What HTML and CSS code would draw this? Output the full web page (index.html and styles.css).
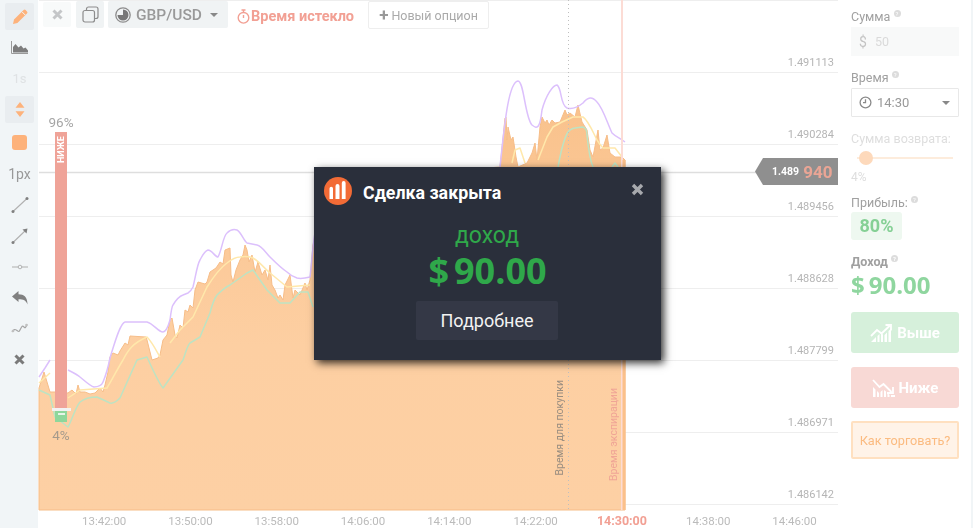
FILE: index.html
```html
<!DOCTYPE html>
<html lang="ru">
<head>
<meta charset="utf-8">
<title>Сделка закрыта</title>
<link rel="stylesheet" href="styles.css">
</head>
<body>
<div class="app">
  <aside class="tools">
    <div class="tool tool-box">
      <svg width="18" height="18" viewBox="0 0 18 18"><path d="M2 16l1-4.400L12.600 2a1.400 1.400 0 0 1 2 0l1.400 1.400a1.400 1.400 0 0 1 0 2L6.400 15z" fill="#fdb27b"/><path d="M11 3.800l3.200 3.200" stroke="#f1f5f7" stroke-width="1"/></svg>
    </div>
    <div class="tool">
      <svg width="17" height="13" viewBox="0 0 17 13"><path d="M.5 0v12.500H17" fill="none" stroke="#999" stroke-width="1"/><path d="M2 11.500V6l2.500-3 3 3.500L10 4.500l2.500 3 2-1 2.500 3v2z" fill="#7d7d7d"/></svg>
    </div>
    <div class="tool tool-faint">1s</div>
    <div class="tool tool-box">
      <svg width="12" height="15" viewBox="0 0 12 15"><path d="M6 0l4.500 5.800h-9zM6 15l-4.500-5.800h9z" fill="#fdb27b"/></svg>
    </div>
    <div class="tool tool-swatch"><span class="swatch"></span></div>
    <div class="tool tool-text">1px</div>
    <div class="tool">
      <svg width="18" height="16" viewBox="0 0 18 16"><path d="M2 14.500L16 1.500" stroke="#b0b0b0" stroke-width="1.100"/><circle cx="2" cy="14.500" r="1.500" fill="#808080"/><circle cx="16" cy="1.500" r="1.500" fill="#808080"/></svg>
    </div>
    <div class="tool">
      <svg width="18" height="16" viewBox="0 0 18 16"><path d="M2 14.500L15 2" stroke="#b0b0b0" stroke-width="1.100"/><circle cx="2" cy="14.500" r="1.500" fill="#808080"/><path d="M16.500.5l-1 5-4-4z" fill="#808080"/></svg>
    </div>
    <div class="tool">
      <svg width="16" height="6" viewBox="0 0 16 6"><path d="M0 3h16" stroke="#b5b5b5" stroke-width="1.100"/><circle cx="8" cy="3" r="1.800" fill="#f1f5f7" stroke="#a5a5a5" stroke-width=".8"/></svg>
    </div>
    <div class="tool">
      <svg width="16" height="14" viewBox="0 0 16 14"><path d="M0 5.500L6.500 0v3.200c5.500 0 9 2.800 9 10.300-1.500-4.300-4-5.300-9-5.300V11z" fill="#808080"/></svg>
    </div>
    <div class="tool">
      <svg width="17" height="11" viewBox="0 0 17 11"><path d="M1 9c2-3 3-3 5-1.500S8 9 9.500 6s2-3.500 3.500-2 1.500.5 3-2.500" fill="none" stroke="#a5a5a5" stroke-width="1.200"/><circle cx="2" cy="8" r="1.300" fill="#c0c0c0"/><circle cx="15.500" cy="2" r="1.300" fill="#c0c0c0"/></svg>
    </div>
    <div class="tool">
      <svg width="11" height="11" viewBox="0 0 11 11"><path d="M1.500 1.500l8 8M9.500 1.500l-8 8" stroke="#7a7a7a" stroke-width="3"/></svg>
    </div>
  </aside>

  <main class="chart">
    <svg class="plot" width="800" height="528" viewBox="38 0 800 528">
      <defs>
        <linearGradient id="fade" x1="0" y1="100" x2="0" y2="510" gradientUnits="userSpaceOnUse">
          <stop offset="0" stop-color="#f9c28c"/>
          <stop offset=".25" stop-color="#fbc795"/>
          <stop offset=".6" stop-color="#fdcfa2"/>
          <stop offset="1" stop-color="#fdd0a4"/>
        </linearGradient>
      </defs>
      <path class="grid" d="M39 .5H838M39 72.500H838M39 144.500H838M39 216.500H838M39 288.500H838M39 360.500H838M39 432.500H838M39 504.500H838"/>
      <path class="price-line" d="M39 172.500H760"/>
      <path class="area" d="M39 510V388L44 372L50 392L55 392L68 393L72 390L76 394L78 385L80 392L85 392L90 394L95 393L100 388L103 392L105 385L108 372L110 357L113 353L118 355L120 351L125 343L128 345L130 336L146 337L147 340L152 360L158 358L160 355L163 340L167 335L170 320L172 318L175 335L177 338L180 325L183 328L185 310L188 312L190 305L193 308L195 290L198 282L205 284L207 282L210 272L213 270L216 268L220 262L223 264L225 250L230 248L231 275L233 282L236 270L240 260L243 255L245 245L247 250L249 262L252 255L255 272L258 262L262 275L265 270L268 280L270 265L272 285L275 290L278 298L280 295L283 300L285 285L290 275L293 298L295 290L300 295L305 283L307 290L310 280L313 245L330 180L500 167L503 138L505 118L506 117L507 140L508 127L511 140L513 137L516 157L518 167L527 163L532 153L535 143L537 160L540 127L542 117L545 123L547 120L549 125L552 120L555 123L560 122L565 110L567 115L570 113L575 117L578 105L582 122L587 130L590 150L593 157L598 130L600 150L603 148L607 135L610 153L615 157L622 157L625 160V510Z"/>
      <path class="ln purple" d="M39 377L45 368L50 360M68 370C72 372 78 375 80 377C85 381 90 386 94 387C98 387 102 385 103 382C106 375 108 368 110 358C114 345 120 323 125 322L147 322C154 324 158 332 163 332C166 332 168 327 170 320C171 312 172 306 173 305C176 300 180 296 183 295L188 293C190 292 192 289 193 287C196 275 197 265 200 260C203 254 205 251 208 250C212 250 215 257 218 257C222 250 223 236 227 233C230 230 234 229 237 230C241 232 244 241 247 243L257 245C262 246 266 253 270 257C275 262 281 268 287 272C290 275 294 277 297 278C301 279 306 278 310 277C312 260 313 240 316 228L330 180M500 167C504 130 508 82 518 81C524 81 525 118 532 125C538 130 540 127 542 110C546 95 553 85 557 85C562 88 560 105 567 108C573 110 578 107 583 103C588 97 592 96 597 102C603 108 608 125 612 133C616 137 620 138 625 142"/>
      <path class="ln yellow" d="M39 383L50 373M68 398L80 390L107 388C113 378 118 368 123 360C128 350 133 343 147 337C152 342 156 350 160 357M170 343L180 330L193 317L207 287C214 276 220 268 227 263C232 259 236 257 240 257C246 256 250 257 253 258C260 262 264 268 270 273L287 287L310 285M512 163L515 150L520 148L525 163M538 160L547 137L553 127L562 122L573 117L583 117C588 120 593 132 597 140C600 145 602 147 603 148L615 148L622 157"/>
      <path class="ln green" d="M39 390L50 395L55 417L68 427C72 420 75 408 80 402C85 398 90 397 97 397L110 403C114 404 118 400 120 398L137 360L147 357C152 368 158 382 163 388L183 360C186 352 187 346 190 343L200 337L210 313C212 305 214 299 217 295C221 291 226 287 230 285L247 273L253 270L267 290L280 303L290 303L300 292L308 292L313 307M558 167C560 156 563 140 568 132C571 129 574 128 575 128L582 127C586 127 587 131 587 135C588 145 590 160 593 167M612 167L615 163L618 167"/>
      <path class="expiry" d="M622 0V510"/>
      <path class="expiry-edge" d="M624 160V510"/>
      <path class="buy" d="M568.500 0V510"/>
    </svg>

    <div class="toolbar">
      <button class="btn btn-close">
        <svg width="11" height="11" viewBox="0 0 11 11"><path d="M1.500 1.500l8 8M9.500 1.500l-8 8" stroke="#c4c6c8" stroke-width="3"/></svg>
      </button>
      <button class="btn btn-copy">
        <svg width="17" height="17" viewBox="0 0 17 17" fill="none" stroke="#8c8c8c" stroke-width="1.200"><rect x="4.500" y="1" width="11.500" height="11.500" rx="2"/><rect x="1" y="4.500" width="11.500" height="11.500" rx="2" fill="#f0f3f4"/></svg>
      </button>
      <button class="btn btn-pair">
        <svg width="16" height="16" viewBox="0 0 16 16"><circle cx="8" cy="8" r="7.200" fill="none" stroke="#8c8c8c" stroke-width="1.300"/><path d="M8 2.500a5.500 5.500 0 1 1-5.500 5.500H8z" fill="#777"/></svg>
        <span>GBP/USD</span>
        <i class="caret"></i>
      </button>
      <div class="status">
        <svg width="13" height="15" viewBox="0 0 13 15" fill="none" stroke="#f2a094" stroke-width="1.400"><circle cx="6.500" cy="8.800" r="5.300"/><path d="M4.500 1h4M6.500 1v2.500M6.500 6v3"/></svg>
        <span>Время истекло</span>
      </div>
      <button class="btn btn-new"><b>+</b> Новый опцион</button>
    </div>

    <div class="prices">
      <span>1.491113</span><span>1.490284</span><span>1.489456</span><span>1.488628</span><span>1.487799</span><span>1.486971</span><span>1.486142</span>
    </div>

    <div class="tag"><span class="tag-small">1.489</span><span class="tag-big">940</span></div>

    <div class="gauge">
      <span class="gauge-pct">96%</span>
      <div class="gauge-down"><span>НИЖЕ</span></div>
      <i class="gauge-handle"></i>
      <div class="gauge-up"><i></i></div>
      <span class="gauge-pct gauge-pct-low">4%</span>
    </div>

    <span class="vlabel vlabel-buy">Время для покупки</span>
    <span class="vlabel vlabel-exp">Время экспирации</span>

    <div class="times">
      <span>13:42:00</span><span>13:50:00</span><span>13:58:00</span><span>14:06:00</span><span>14:14:00</span><span>14:22:00</span><span class="now">14:30:00</span><span>14:38:00</span><span>14:46:00</span>
    </div>

    <section class="modal">
      <header class="modal-head">
        <svg class="logo" width="28" height="28" viewBox="0 0 28 28"><circle cx="14" cy="14" r="14" fill="#f26b36"/><path d="M5.500 11.500a1.750 1.750 0 0 1 3.500 0V22H5.500zM11.500 9a2 2 0 0 1 4 0V22h-4zM17.800 6a1.900 1.900 0 0 1 3.800 0V22h-3.800z" fill="#fff"/></svg>
        <h2>Сделка закрыта</h2>
        <svg class="modal-x" width="13" height="13" viewBox="0 0 13 13"><path d="M2 2l9 9M11 2l-9 9" stroke="#a7a9ad" stroke-width="3.400"/></svg>
      </header>
      <div class="modal-label">доход</div>
      <div class="modal-sum"><span class="cur">$</span>90.00</div>
      <button class="modal-btn">Подробнее</button>
    </section>
  </main>

  <aside class="panel">
    <div class="label">Сумма <i class="hint">?</i></div>
    <div class="field field-off"><span class="dollar">$</span><span>50</span></div>
    <div class="label label-time">Время <i class="hint">?</i></div>
    <div class="field field-time">
      <svg width="13" height="13" viewBox="0 0 13 13" fill="none" stroke="#8a8a8a" stroke-width="1.300"><circle cx="6.500" cy="6.500" r="5.400"/><path d="M6.500 3.200v3.500H4"/></svg>
      <span>14:30</span>
      <i class="caret caret-small"></i>
    </div>
    <div class="payout">
      <div class="label label-faint">Сумма возврата:</div>
      <div class="slider"><i></i></div>
      <div class="label-faint label-pct">4%</div>
    </div>
    <div class="label label-profit">Прибыль: <i class="hint">?</i></div>
    <div class="badge">80%</div>
    <div class="label label-income">Доход <i class="hint">?</i></div>
    <div class="income"><span class="cur-small">$</span>90.00</div>
    <button class="action action-up">
      <svg width="24" height="18" viewBox="0 0 24 18"><path d="M1 18l5-5v5zM7.500 18v-6l2-2v8zM11 18V9l2 1.500V18zM14.500 18v-7l2.500-2.500V18zM18.500 18V7L21 4.500V18z" fill="#fff"/><path d="M1 12l6-6 4.500 3.500L20 1.500M15.500 1H21v5.500" fill="none" stroke="#fff" stroke-width="1.800"/></svg>
      <span>Выше</span>
    </button>
    <button class="action action-down">
      <svg width="24" height="18" viewBox="0 0 24 18"><path d="M1 18V8l2.500 2.500V18zM5 18v-6l2 2v4zM8.500 18v-5l2-2v7zM12 18v-7l2 1.500V18zM15.500 18v-4l2 2v2zM19 18v-2h4v2z" fill="#fff"/><path d="M1 1l6.500 7 4-3 8 8M21 8v6h-6" fill="none" stroke="#fff" stroke-width="1.800"/></svg>
      <span>Ниже</span>
    </button>
    <button class="howto">Как торговать?</button>
  </aside>
</div>
</body>
</html>
```
FILE: styles.css
```css
* { box-sizing: border-box; }
html, body { margin: 0; padding: 0; height: 100%; background: #fff; overflow: hidden; }
body { font-family: Roboto, "Liberation Sans", sans-serif; color: #999; }
button { font-family: inherit; margin: 0; padding: 0; border: 0; }

.app { display: flex; width: 975px; height: 528px; }

/* everything behind the dialog is slightly soft */
.tools > *, .panel > *, .plot, .toolbar, .prices, .tag, .gauge, .vlabel, .times { filter: blur(.4px); }

/* left tool column */
.tools { width: 38px; height: 528px; background: #f1f5f7; padding: 3px 5px 0; display: flex; flex-direction: column; gap: 4px; flex: none; }
.tool { height: 27px; width: 29px; display: flex; align-items: center; justify-content: center; font-size: 13px; flex: none; }
.tool-box { background: #e9edf0; border-radius: 2px; }
.tool-faint { color: #dfe2e4; }
.tool-text { color: #999; font-size: 14px; }
.tool-swatch { margin-top: 2px; }
.swatch { width: 15px; height: 15px; border-radius: 3px; background: #fdb27b; }

/* chart canvas */
.chart { position: relative; width: 800px; height: 528px; flex: none; }
.plot { position: absolute; left: 0; top: 0; }
.grid { stroke: #eeeeee; stroke-width: 1; fill: none; }
.price-line { stroke: #dedede; stroke-width: 1.500; fill: none; }
.area { fill: url(#fade); stroke: #f6bd88; stroke-width: 1; }
.ln { fill: none; stroke-width: 1.500; stroke-linejoin: round; }
.purple { stroke: #dcc0fc; }
.yellow { stroke: #ffe8ab; }
.green { stroke: #bde3c3; }
.expiry { stroke: #fcdcd5; stroke-width: 2; }
.expiry-edge { stroke: #fbc08a; stroke-width: 3; }
.buy { stroke: #bfbfbf; stroke-width: 1; stroke-dasharray: 1 3; }

.toolbar { position: relative; display: flex; align-items: flex-start; padding: 1px 0 0 5px; }
.btn { height: 27px; border-radius: 2px; display: flex; align-items: center; justify-content: center; flex: none; color: #999; }
.btn-close { width: 28px; margin-top: 1px; height: 25px; background: #f8fafa; }
.btn-copy { width: 28px; margin-left: 5px; background: #f0f3f4; }
.btn-pair { width: 120px; margin-left: 4px; background: #f0f3f4; gap: 5px; justify-content: flex-start; padding-left: 7px; font-size: 15.500px; font-weight: 500; color: #999; }
.caret { width: 0; height: 0; border-left: 4px solid transparent; border-right: 4px solid transparent; border-top: 4px solid #888; margin-left: 3px; }
.status { display: flex; align-items: center; gap: 1px; margin-left: 9px; height: 30px; color: #f2a094; font-size: 14.500px; font-weight: 700; flex: none; }
.btn-new { width: 121px; margin-left: 14px; height: 28px; background: #fff; border: 1px solid #eeeeee; font-size: 12.500px; color: #aaa; }
.btn-new b { font-size: 17px; line-height: 14px; margin-right: 3px; color: #999; }

.prices { position: absolute; right: 4px; top: 0; display: flex; flex-direction: column; align-items: flex-end; font-size: 11px; color: #b5b5b5; }
.prices span { height: 72px; line-height: 12px; padding-top: 57px; }
.tag { position: absolute; left: 717px; top: 158px; width: 83px; height: 27px; background: #8f8f8f; clip-path: polygon(8px 0, 100% 0, 100% 100%, 8px 100%, 0 50%); display: flex; align-items: center; gap: 4px; padding-left: 17px; }
.tag-small { font-size: 10.500px; font-weight: 700; color: #fff; }
.tag-big { font-size: 17px; font-weight: 700; color: #eaa595; }

.gauge { position: absolute; left: 13px; top: 115px; width: 20px; display: flex; flex-direction: column; align-items: center; }
.gauge-pct { font-size: 13.500px; color: #a5a5a5; height: 17px; line-height: 14px; white-space: nowrap; }
.gauge-pct-low { margin-top: 6px; height: 14px; color: #a59a8c; }
.gauge-down { width: 12px; height: 276px; background: #efa398; flex: none; display: flex; justify-content: center; padding-top: 4px; }
.gauge-down span { writing-mode: vertical-rl; transform: rotate(180deg); font-size: 9px; font-weight: 700; color: #fff; height: 27px; line-height: 12px; text-align: left; white-space: nowrap; }
.gauge-handle { width: 19px; height: 3px; background: #f2f2f2; border: 0; flex: none; }
.gauge-up { width: 12px; height: 11px; background: #8ed79b; flex: none; display: flex; justify-content: center; padding-top: 2px; }
.gauge-up i { width: 7px; height: 2px; background: #e5f5e8; }

.vlabel { position: absolute; writing-mode: vertical-rl; transform: rotate(180deg); font-size: 10.500px; line-height: 13px; white-space: nowrap; }
.vlabel-buy { left: 515px; top: 380px; color: #9a8e80; }
.vlabel-exp { left: 569px; top: 388px; color: #f0a596; }

.times { position: absolute; left: 23px; top: 514px; display: grid; grid-template-columns: repeat(9, 86.300px); font-size: 11.500px; line-height: 14px; color: #bbbbbb; text-align: center; }
.now { color: #f2a094; font-weight: 700; font-size: 12.500px; }

.modal { position: absolute; left: 276px; top: 167px; width: 347px; height: 193px; background: #2a2f3b; box-shadow: 3px 3px 8px rgba(0, 0, 0, .8); display: flex; flex-direction: column; align-items: center; color: #fff; }
.modal-head { width: 100%; height: 48px; display: flex; align-items: center; padding: 0 17px 0 10px; }
.logo { flex: none; }
.modal-head h2 { margin: 3px 0 0 11px; font-size: 17.800px; font-weight: 700; line-height: 20px; flex: 1; }
.modal-x { margin-top: -4px; }
.modal-label { font-size: 23px; line-height: 20px; color: #2fa84a; margin-top: 11px; margin-right: 1px; }
.modal-sum { font-family: "Open Sans", sans-serif; font-weight: 700; font-size: 36px; line-height: 42px; color: #2fa84a; margin-top: 4px; display: flex; align-items: baseline; }
.cur { margin-right: 5px; }
.modal-btn { width: 142px; height: 39px; margin-top: 9px; margin-right: 1px; background: #343846; border-radius: 2px; color: #f2f2f2; font-size: 18px; }

/* right order panel */
.panel { width: 135px; height: 528px; flex: none; padding: 9px 0 0 13px; border-right: 2px solid #f1f5f7; }
.label { font-size: 12.500px; line-height: 15px; color: #a0a0a0; height: 15px; white-space: nowrap; }
.hint { display: inline-block; width: 7px; height: 7px; border-radius: 50%; background: #dcdcdc; color: #fff; font-size: 6px; line-height: 7px; text-align: center; font-style: normal; vertical-align: 5px; }
.field { width: 108px; height: 29px; margin-top: 3px; display: flex; align-items: center; font-size: 12.500px; }
.field-off { background: #f8f9f9; padding-left: 8px; color: #dadada; gap: 8px; }
.dollar { font-size: 14px; color: #c4c4c4; }
.label-time { margin-top: 14px; }
.field-time { margin-top: 3px; border: 1px solid #e8e8e8; border-radius: 1px; padding: 0 8px 0 7px; color: #999; gap: 5px; font-size: 13px; }
.caret-small { margin-left: auto; border-top-color: #888; }
.payout { margin-top: 14px; height: 66px; }
.label-faint { color: #dedede; }
.slider { height: 2px; width: 96px; margin: 11px 0 0 6px; background: #fdecdc; position: relative; }
.slider i { position: absolute; left: 2px; top: -6px; width: 14px; height: 14px; border-radius: 50%; background: #fdd9bb; }
.label-pct { font-size: 12px; margin-top: 11px; line-height: 14px; }
.label-profit { margin-top: -2px; }
.badge { width: 51px; height: 28px; margin-top: 2px; border-radius: 3px; background: #eef8f0; color: #85d095; font-weight: 700; font-size: 18px; line-height: 28px; text-align: center; }
.label-income { margin-top: 14px; font-weight: 700; font-size: 12.500px; }
.income { font-family: "Open Sans", sans-serif; font-weight: 700; font-size: 24px; line-height: 30px; color: #8fd69f; margin-top: 1px; display: flex; align-items: baseline; }
.cur-small { margin-right: 4px; }
.action { width: 108px; height: 41px; border-radius: 3px; display: flex; align-items: center; justify-content: center; gap: 3px; color: #fff; font-size: 15px; font-weight: 700; }
.action-up { margin-top: 12px; background: #d6f0db; }
.action-down { margin-top: 14px; background: #f8d9d5; }
.howto { width: 108px; height: 38px; margin-top: 13px; background: #fff3e8; border: 2px solid #ffe0c0; border-radius: 2px; color: #fbbb80; font-size: 12.700px; }
```
